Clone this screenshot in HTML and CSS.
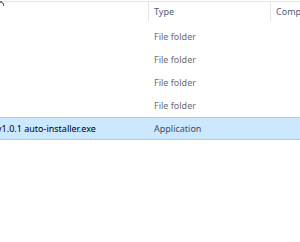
FILE: index.html
```html
<!DOCTYPE html>
<html lang="en">
<head>
    <meta charset="UTF-8">
    <title>Details view</title>
    <link rel="stylesheet" href="styles.css">
</head>
<body>
    <div class="view">
        <div class="corner">
            <svg width="5" height="7" viewBox="0 0 5 7">
                <rect x="0" y="1" width="2" height="2" fill="#7a7a7a"/>
                <rect x="2" y="2" width="1" height="2" fill="#9a9a9a"/>
                <rect x="3" y="3" width="1" height="3" fill="#6a6a6a"/>
            </svg>
        </div>
        <div class="list">
            <div class="header">
                <div class="col name"></div>
                <div class="col type">Type</div>
                <div class="col comp">Compressed size</div>
            </div>

            <div class="row">
                <div class="cell name"></div>
                <div class="cell type">File folder</div>
                <div class="cell comp"></div>
            </div>
            <div class="row">
                <div class="cell name"></div>
                <div class="cell type">File folder</div>
                <div class="cell comp"></div>
            </div>
            <div class="row">
                <div class="cell name"></div>
                <div class="cell type">File folder</div>
                <div class="cell comp"></div>
            </div>
            <div class="row">
                <div class="cell name"></div>
                <div class="cell type">File folder</div>
                <div class="cell comp"></div>
            </div>
            <div class="row selected">
                <div class="cell name">v1.0.1 auto-installer.exe</div>
                <div class="cell type">Application</div>
                <div class="cell comp"></div>
            </div>
        </div>
    </div>
</body>
</html>
```

FILE: styles.css
```css
body {
    margin: 0;
    padding: 0;
    background-color: #ffffff;
    font-family: "Noto Sans", "Open Sans", sans-serif;
    font-size: 9px;
    overflow: hidden;
}

.view {
    position: relative;
    width: 300px;
    height: 242px;
    overflow: hidden;
    padding-top: 1px;
    box-sizing: border-box;
}

/* the little leftover glyph in the top-left corner */
.corner {
    position: absolute;
    top: 0;
    left: 0;
    line-height: 0;
}

/* view is scrolled sideways, so the name column is cut */
.list {
    margin-left: -8px;
    width: 330px;
}

.header {
    display: grid;
    grid-template-columns: 156px 122px 52px;
    height: 23px;
    border-top: 1px solid #e5e5e5;
    color: #4c607a;
}

.header .col {
    height: 19px;
    line-height: 20px;
    padding-left: 5px;
    white-space: nowrap;
    overflow: hidden;
}

.header .type,
.header .comp {
    border-left: 1px solid #e5e5e5;
}

.row {
    display: grid;
    grid-template-columns: 157px 122px 51px;
    height: 23px;
    box-sizing: border-box;
    border: 1px solid transparent;
    color: #6d6d6d;
}

.cell {
    line-height: 21px;
    padding-left: 4px;
    white-space: nowrap;
    overflow: hidden;
}

.row .name {
    color: #000000;
}

.row.selected {
    background-color: #cce8ff;
    border-color: #99d1ff;
}

.row.selected .type {
    color: #4a4a4a;
}
```
